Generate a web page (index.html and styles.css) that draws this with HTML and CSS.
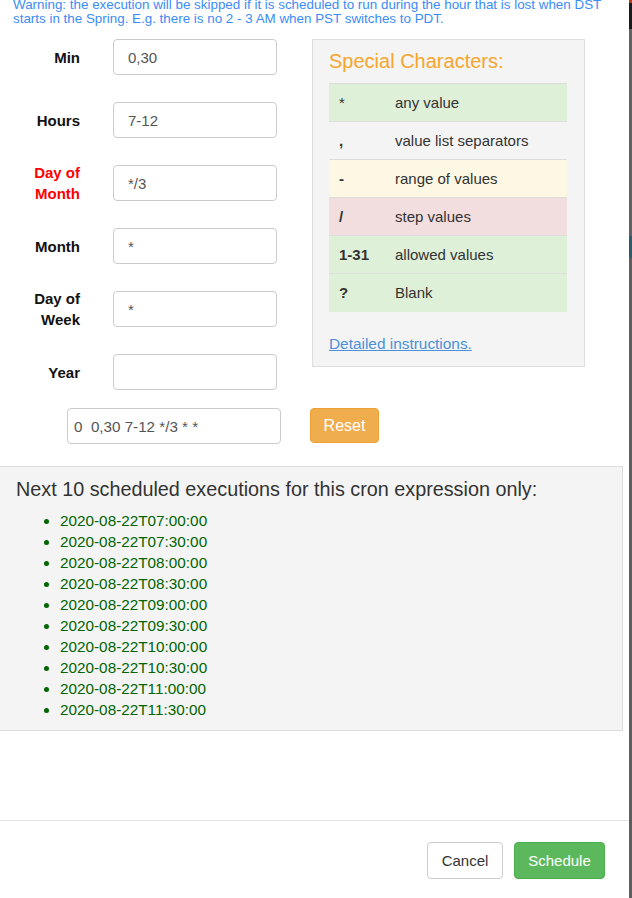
FILE: index.html
```html
<!DOCTYPE html>
<html>
<head>
<meta charset="utf-8">
<link rel="stylesheet" href="styles.css">
</head>
<body>
<div class="page">
  <div class="modal">
    <p class="warning">Warning: the execution will be skipped if it is scheduled to run during the hour that is lost when DST starts in the Spring. E.g. there is no 2 - 3 AM when PST switches to PDT.</p>

    <div class="top">
      <div class="fields">
        <div class="row"><label class="lbl">Min</label><input class="inp" value="0,30"></div>
        <div class="row"><label class="lbl">Hours</label><input class="inp" value="7-12"></div>
        <div class="row"><label class="lbl red">Day of Month</label><input class="inp" value="*/3"></div>
        <div class="row"><label class="lbl">Month</label><input class="inp" value="*"></div>
        <div class="row"><label class="lbl">Day of Week</label><input class="inp" value="*"></div>
        <div class="row"><label class="lbl">Year</label><input class="inp" value=""></div>
      </div>

      <div class="panel">
        <h3 class="panel-title">Special Characters:</h3>
        <table class="chars">
          <tr class="ok"><td class="c1 norm">*</td><td>any value</td></tr>
          <tr><td class="c1">,</td><td>value list separators</td></tr>
          <tr class="warn"><td class="c1">-</td><td>range of values</td></tr>
          <tr class="bad"><td class="c1">/</td><td>step values</td></tr>
          <tr class="ok"><td class="c1">1-31</td><td>allowed values</td></tr>
          <tr class="ok"><td class="c1">?</td><td>Blank</td></tr>
        </table>
        <a class="link" href="#">Detailed instructions.</a>
      </div>
    </div>

    <div class="expr-row">
      <input class="expr" value="0  0,30 7-12 */3 * *">
      <button class="btn reset">Reset</button>
    </div>

    <div class="next">
      <h4 class="next-title">Next 10 scheduled executions for this cron expression only:</h4>
      <ul class="times">
        <li>2020-08-22T07:00:00</li>
        <li>2020-08-22T07:30:00</li>
        <li>2020-08-22T08:00:00</li>
        <li>2020-08-22T08:30:00</li>
        <li>2020-08-22T09:00:00</li>
        <li>2020-08-22T09:30:00</li>
        <li>2020-08-22T10:00:00</li>
        <li>2020-08-22T10:30:00</li>
        <li>2020-08-22T11:00:00</li>
        <li>2020-08-22T11:30:00</li>
      </ul>
    </div>

    <div class="footer">
      <button class="btn cancel">Cancel</button>
      <button class="btn schedule">Schedule</button>
    </div>
  </div>
  <div class="backdrop">
    <div class="bd-red"></div>
    <div class="bd-dark"></div>
    <div class="bd-gray1"></div>
    <div class="bd-teal"></div>
    <div class="bd-gray2"></div>
  </div>
</div>
</body>
</html>
```

FILE: styles.css
```css
* { box-sizing: border-box; }
html, body { margin: 0; padding: 0; background: #fff; }
body {
  font-family: "Liberation Sans", Arial, sans-serif;
  font-size: 14px;
  color: #333;
  overflow: hidden;
}
.page {
  display: flex;
  width: 632px;
  height: 898px;
  overflow: hidden;
}
.modal {
  width: 629px;
  flex: none;
  background: #fff;
  display: flex;
  flex-direction: column;
}
.backdrop {
  flex: 1;
  display: flex;
  flex-direction: column;
}
.bd-red { height: 3px; background: #b8401f; }
.bd-dark { height: 26px; background: #1b1b1b; }
.bd-gray1 { height: 207px; background: #626262; }
.bd-teal { height: 22px; background: #2f5c6c; }
.bd-gray2 { flex: 1; background: #5e5e5e; }

.warning {
  margin: -2px 0 0 0;
  padding: 0 20px 0 13px;
  font-size: 13.4px;
  line-height: 14px;
  color: #3a8cf5;
}

.top {
  display: flex;
  align-items: flex-start;
  margin-top: 13px;
}
.fields {
  width: 312px;
  flex: none;
  display: flex;
  flex-direction: column;
  gap: 27px;
}
.row {
  display: flex;
  align-items: center;
  height: 36px;
}
.lbl {
  width: 67px;
  margin-left: 13px;
  text-align: right;
  font-weight: bold;
  font-size: 15px;
  line-height: 21px;
  color: #111;
}
.lbl.red { color: #f00; }
.inp {
  margin-left: 33px;
  width: 164px;
  height: 36px;
  border: 1px solid #ccc;
  border-radius: 4px;
  padding: 0 14px;
  font-family: inherit;
  font-size: 15px;
  color: #555;
  background: #fff;
}

.panel {
  width: 273px;
  flex: none;
  background: #f4f4f4;
  border: 1px solid #ddd;
  padding: 10px 17px 12px 16px;
}
.panel-title {
  margin: 0 0 11px 0;
  font-size: 20px;
  font-weight: normal;
  line-height: 22px;
  color: #f7a52c;
}
.chars {
  width: 100%;
  border-collapse: collapse;
  margin-bottom: 22px;
  font-size: 15px;
}
.chars td {
  border-top: 1px solid #ddd;
  padding: 9px 10px;
  line-height: 19px;
  height: 38px;
  vertical-align: middle;
  color: #333;
}
.chars td.c1 { width: 56px; font-weight: bold; }
.chars td.norm { font-weight: normal; vertical-align: top; }
.chars tr.ok td { background: #dff0d8; }
.chars tr.warn td { background: #fcf8e3; }
.chars tr.bad td { background: #f2dede; }
.link {
  display: block;
  font-size: 15.4px;
  line-height: 20px;
  color: #4a90d9;
  text-decoration: underline;
}

.expr-row {
  display: flex;
  align-items: flex-start;
  margin-top: 18px;
}
.expr {
  margin-left: 67px;
  width: 214px;
  height: 36px;
  border: 1px solid #ccc;
  border-radius: 4px;
  padding: 0 6px;
  font-family: inherit;
  font-size: 15.2px;
  color: #555;
}
.btn {
  font-family: inherit;
  font-size: 15px;
  border-radius: 4px;
  border: 1px solid transparent;
  cursor: pointer;
}
.reset {
  margin-left: 29px;
  width: 69px;
  height: 35px;
  background: #f0ad4e;
  border-color: #eea236;
  color: #fff;
  font-size: 16px;
}

.next {
  margin: 22px 0 0 -1px;
  width: 624px;
  background: #f4f4f4;
  border: 1px solid #ddd;
  padding: 11px 15px 10px 16px;
}
.next-title {
  margin: 0 0 10px 0;
  font-size: 19.8px;
  font-weight: normal;
  line-height: 22px;
  color: #333;
}
.times {
  margin: 0;
  padding-left: 44px;
  color: #006400;
  font-size: 15.3px;
  line-height: 21px;
}

.footer {
  margin-top: 89px;
  border-top: 1px solid #e5e5e5;
  padding: 21px 24px 0 0;
  display: flex;
  justify-content: flex-end;
  gap: 11px;
}
.cancel {
  width: 76px;
  height: 37px;
  background: #fff;
  border-color: #ccc;
  color: #333;
}
.schedule {
  width: 91px;
  height: 37px;
  background: #5cb85c;
  border-color: #4cae4c;
  color: #fff;
}
```
